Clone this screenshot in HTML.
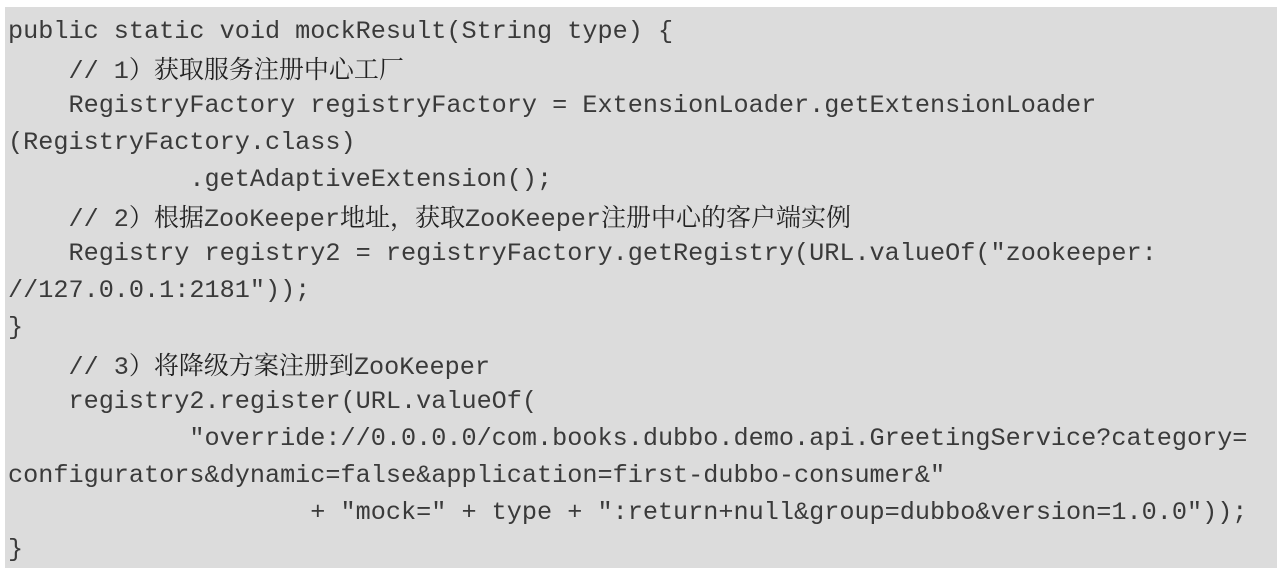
<!DOCTYPE html>
<html><head><meta charset="utf-8"><style>
html,body{margin:0;padding:0;background:#fff;width:1280px;height:574px;overflow:hidden}
.box{position:absolute;left:5px;top:7px;width:1272px;height:561px;background:#dcdcdc}
.l{position:absolute;left:8px;height:37px;line-height:37px;font-family:"Liberation Mono","Noto Serif CJK SC",monospace;font-size:25.2px;color:#3a3a3a;white-space:pre}
.c{font-family:"Noto Serif CJK SC","Noto Sans CJK SC",serif;font-size:25px;color:#222}
</style></head><body>
<div class="box"></div>
<div class="l" style="top:13px">public static void mockResult(String type) {</div>
<div class="l" style="top:50px">    // 1<span class="c">）获取服务注册中心工厂</span></div>
<div class="l" style="top:87px">    RegistryFactory registryFactory = ExtensionLoader.getExtensionLoader</div>
<div class="l" style="top:124px">(RegistryFactory.class)</div>
<div class="l" style="top:161px">            .getAdaptiveExtension();</div>
<div class="l" style="top:198px">    // 2<span class="c">）根据</span>ZooKeeper<span class="c">地址，获取</span>ZooKeeper<span class="c">注册中心的客户端实例</span></div>
<div class="l" style="top:235px">    Registry registry2 = registryFactory.getRegistry(URL.valueOf("zookeeper:</div>
<div class="l" style="top:272px">//127.0.0.1:2181"));</div>
<div class="l" style="top:309px">}</div>
<div class="l" style="top:346px">    // 3<span class="c">）将降级方案注册到</span>ZooKeeper</div>
<div class="l" style="top:383px">    registry2.register(URL.valueOf(</div>
<div class="l" style="top:420px">            "override://0.0.0.0/com.books.dubbo.demo.api.GreetingService?category=</div>
<div class="l" style="top:457px">configurators&amp;dynamic=false&amp;application=first-dubbo-consumer&amp;"</div>
<div class="l" style="top:494px">                    + "mock=" + type + ":return+null&amp;group=dubbo&amp;version=1.0.0"));</div>
<div class="l" style="top:531px">}</div>
</body></html>
